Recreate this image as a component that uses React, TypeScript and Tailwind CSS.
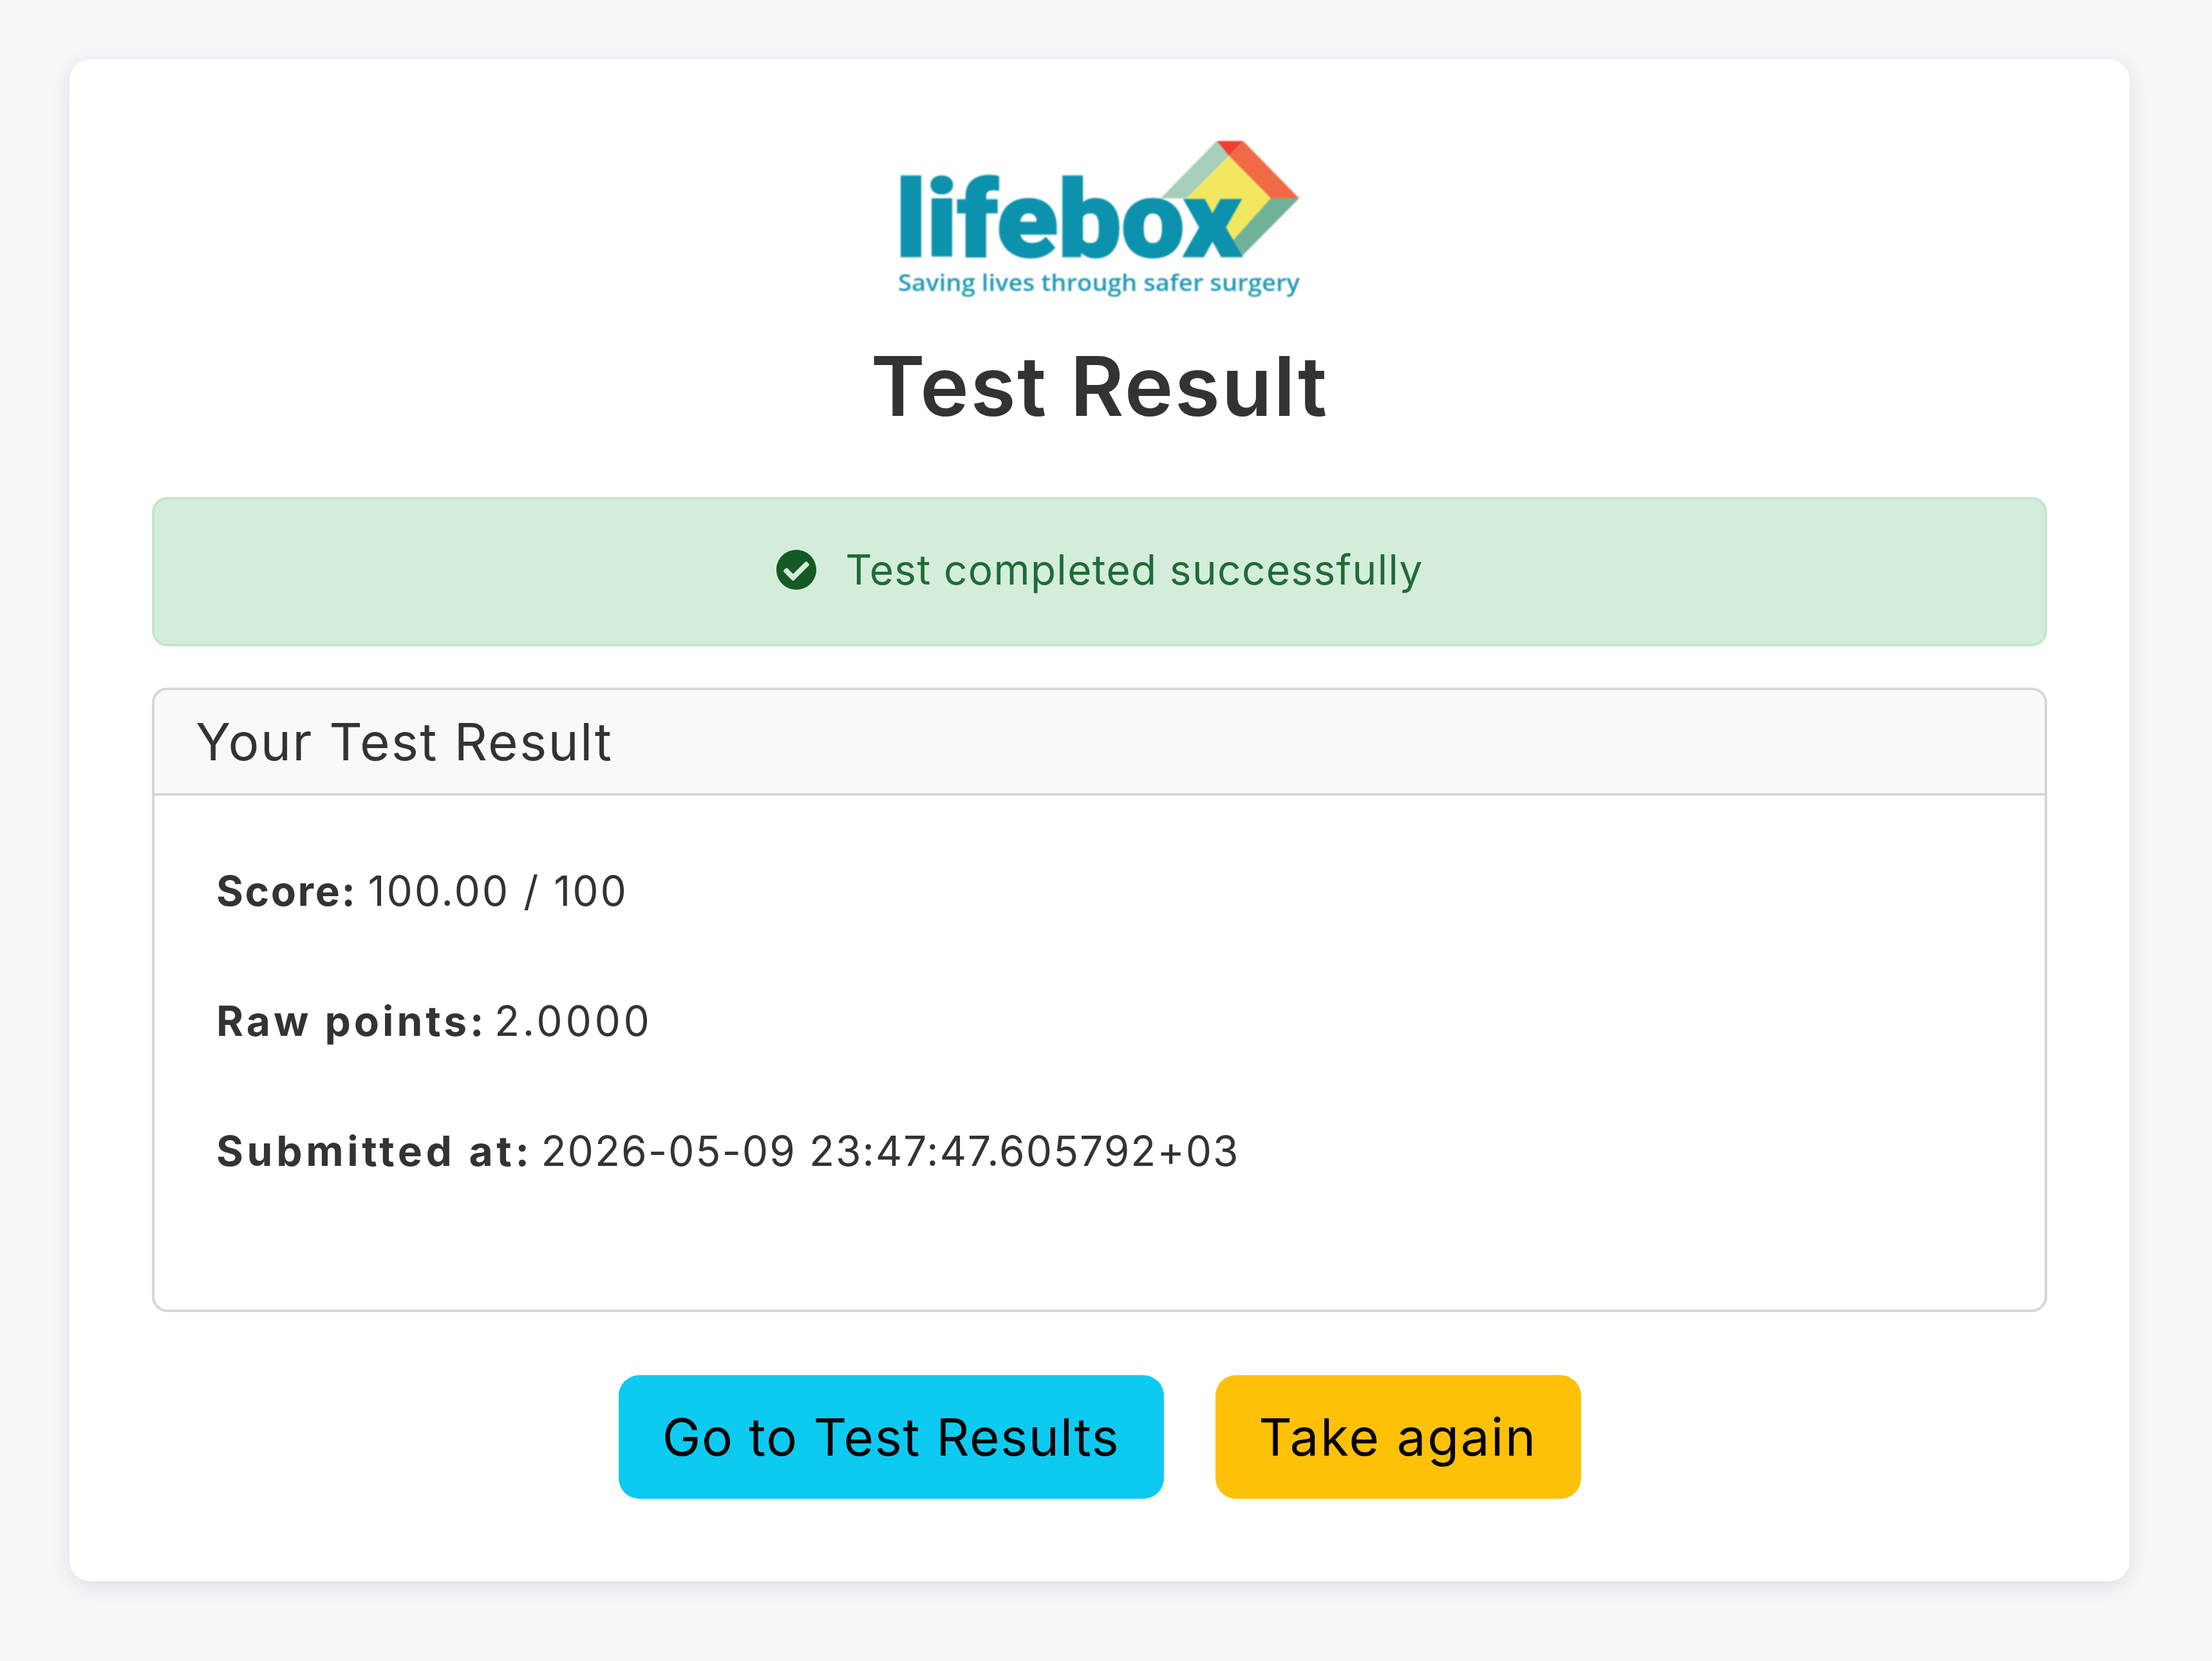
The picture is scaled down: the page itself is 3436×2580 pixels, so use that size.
import { FaCheckCircle } from 'react-icons/fa'

function LifeboxLogo() {
  return (
    <svg width="640" height="260" viewBox="1388 210 640 260" className="block blur-[1px]">
      <polygon points="1890,219 1931,219 1909,242" fill="#ef3e2f" />
      <polygon points="1931,219 2018,308 1974,308 1909,242" fill="#ef6a45" />
      <polygon points="1890,219 1909,242 1843,308 1803,308" fill="#a6cfbb" />
      <polygon points="1909,242 1974,308 1912,377 1880,340 1843,308" fill="#f2e85f" />
      <polygon points="2018,308 1974,308 1912,377 1928,399" fill="#6fb297" />
      <text
        x="1391"
        y="398"
        textLength="537"
        lengthAdjust="spacingAndGlyphs"
        fill="#0c92ac"
        stroke="#0c92ac"
        strokeWidth="3"
        fontSize="165"
        fontWeight="900"
        fontFamily="Roboto, sans-serif"
      >
        lifebox
      </text>
      <text
        x="1395"
        y="452"
        textLength="624"
        lengthAdjust="spacingAndGlyphs"
        fill="#1f9ab5"
        fontSize="36"
        fontWeight="600"
        fontFamily="'Open Sans', sans-serif"
      >
        Saving lives through safer surgery
      </text>
    </svg>
  )
}

export default function App() {
  return (
    <div className="min-h-[2580px] bg-[#f5f7fb] px-[108px] pt-[92px] font-['Inter',sans-serif] text-[#212529]">
      <div className="flex h-[2364px] w-[3200px] flex-col items-stretch rounded-[32px] bg-white px-[128px] pt-[118px] shadow-[0_8px_32px_rgba(0,0,0,0.1)]">
        <div className="flex justify-center">
          <LifeboxLogo />
        </div>
        <h1 className="mt-[53px] mb-[95px] text-center text-[128px] leading-[154px] font-semibold tracking-[2.4px] text-[#333]">
          Test Result
        </h1>

        <div className="flex h-[232px] items-center justify-center gap-[44px] rounded-[24px] border-[4px] border-[#c3e6cb] bg-[#d4edda] pb-[6px] text-[64px] leading-[96px] text-[#1f6b38]">
          <FaCheckCircle className="h-[64px] w-[64px] text-[#145a24]" />
          <span className="tracking-[1.3px]">Test completed successfully</span>
        </div>

        <div className="mt-[64px] h-[970px] overflow-hidden rounded-[24px] border-[4px] border-[#d6d6d6]">
          <div className="border-b-[4px] border-[#d6d6d6] bg-[#f8f9fa] px-[64px] pt-[32px] pb-[32px] text-[80px] leading-[96px] tracking-[2.25px] text-[#333]">
            Your Test Result
          </div>
          <div className="flex flex-col gap-[106px] pt-[100px] pl-[96px] text-[64px] leading-[96px] text-[#333]">
            <p className="tracking-[3px]"><b className="font-bold tracking-[2.6px]">Score:</b> <span className="-ml-[4px]">100.00 / 100</span></p>
            <p className="tracking-[4.7px]"><b className="font-bold tracking-[5px]">Raw points:</b> <span className="-ml-[11px]">2.0000</span></p>
            <p className="tracking-[2px]"><b className="font-bold tracking-[5.7px]">Submitted at:</b> <span className="-ml-[7px]">2026-05-09 23:47:47.605792+03</span></p>
          </div>
        </div>

        <div className="mt-[98px] flex justify-center gap-[80px]">
          <button className="h-[192px] w-[847px] rounded-[32px] bg-[#0dcaf0] text-[80px] leading-[120px] tracking-[1.5px] text-black">
            Go to Test Results
          </button>
          <button className="h-[192px] w-[568px] rounded-[32px] bg-[#ffc107] text-[80px] leading-[120px] tracking-[2.5px] text-black">
            Take again
          </button>
        </div>
      </div>
    </div>
  )
}
